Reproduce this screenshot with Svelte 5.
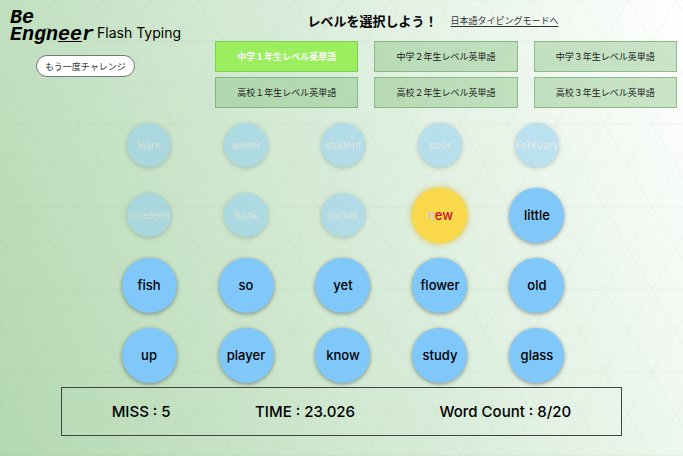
<script>
  const levels = [
    "中学１年生レベル英単語",
    "中学２年生レベル英単語",
    "中学３年生レベル英単語",
    "高校１年生レベル英単語",
    "高校２年生レベル英単語",
    "高校３年生レベル英単語",
  ];

  const words = [
    "learn", "winter", "student", "poor", "February",
    "nineteen", "bank", "racket", "new", "little",
    "fish", "so", "yet", "flower", "old",
    "up", "player", "know", "study", "glass",
  ];

  let level = $state(0);
  let current = $state(8);
  let typed = $state(1);
  let miss = $state(5);
  let time = $state("23.026");

  function restart() {
    current = 0;
    typed = 0;
    miss = 0;
    time = "0.000";
  }

  function selectLevel(index) {
    level = index;
    restart();
  }

  function handleKeydown(event) {
    if (current >= words.length || event.key.length !== 1) {
      return;
    }
    if (event.key !== words[current][typed]) {
      miss += 1;
      return;
    }
    typed += 1;
    if (typed === words[current].length) {
      current += 1;
      typed = 0;
    }
  }
</script>

<svelte:window onkeydown={handleKeydown} />

<div class="page">
  <svg class="backdrop" aria-hidden="true">
    <defs>
      <pattern id="triangles" x="6" y="0" width="47.86" height="82.8" patternUnits="userSpaceOnUse">
        <path
          d="M0 0H47.86M0 41.4H47.86M0 0L47.86 82.8M47.86 0L0 82.8"
          fill="none"
          stroke="#6f9f78"
          stroke-opacity="0.07"
        />
      </pattern>
    </defs>
    <rect width="100%" height="100%" fill="url(#triangles)" />
  </svg>

  <header>
    <div class="brand">
      <h1>
        <span class="logo">
          <span>Be</span>
          <span>Eng<i class="dot"></i>n<span class="line">ee</span>r</span>
        </span>
        <span class="title">Flash Typing</span>
      </h1>
      <button type="button" class="retry" onclick={restart}>もう一度チャレンジ</button>
    </div>

    <div class="menu">
      <div class="lead">
        <h2>レベルを選択しよう！</h2>
        <a href="#japanese">日本語タイピングモードへ</a>
      </div>
      <div class="levels">
        {#each levels as name, index (name)}
          <button
            type="button"
            class="level"
            class:active={level === index}
            aria-pressed={level === index}
            onclick={() => selectLevel(index)}
          >
            {name}
          </button>
        {/each}
      </div>
    </div>
  </header>

  <main>
    <ul class="words">
      {#each words as word, index (word)}
        <li class="word" class:done={index < current} class:current={index === current}>
          {#if index === current}
            <span class="typed">{word.slice(0, typed)}</span>{word.slice(typed)}
          {:else}
            {word}
          {/if}
        </li>
      {/each}
    </ul>

    <div class="stats">
      <span>MISS : {miss}</span>
      <span>TIME : {time}</span>
      <span>Word Count : {current}/{words.length}</span>
    </div>
  </main>
</div>

<style>
  :global(body) {
    margin: 0;
  }

  .page {
    position: relative;
    min-height: 100vh;
    box-sizing: border-box;
    background: linear-gradient(69deg, #b3d8b0, #d9edda 54%, #fff);
    color: #000;
    font-family: Inter, "Noto Sans CJK JP", sans-serif;
  }

  .backdrop {
    position: absolute;
    inset: 0;
    width: 100%;
    height: 100%;
  }

  header,
  main {
    position: relative;
  }

  header {
    display: grid;
    grid-template-columns: 215px 1fr;
    padding-right: 6px;
  }

  .brand {
    padding: 9px 0 0 10px;
  }

  h1 {
    display: flex;
    align-items: flex-end;
    gap: 3px;
    margin: 0;
    font-size: 14px;
    font-weight: 400;
    line-height: 17px;
    white-space: nowrap;
  }

  .logo {
    display: grid;
    font: italic bold 20px/17px "Liberation Mono", monospace;
  }

  .dot {
    position: absolute;
    width: 3px;
    height: 1px;
    margin-top: 2px;
    background: #3fae4a;
  }

  .line {
    text-decoration: underline 1px;
    text-underline-offset: 1px;
    text-decoration-skip-ink: none;
  }

  .title {
    padding-bottom: 2px;
  }

  .retry {
    display: block;
    height: 22px;
    margin: 12px 0 0 26px;
    padding: 0 8px;
    border: 1px solid #777;
    border-radius: 11px;
    background: #fff;
    color: #333;
    font: inherit;
    font-size: 9px;
    cursor: pointer;
  }

  .lead {
    display: flex;
    align-items: center;
    justify-content: center;
    gap: 13px;
    height: 41px;
    padding-right: 26px;
  }

  h2 {
    margin: 0;
    font-size: 13px;
    font-weight: 700;
  }

  a {
    color: #333;
    font-size: 9px;
    text-underline-offset: 2px;
  }

  .levels {
    display: grid;
    grid-template-columns: repeat(3, 1fr);
    gap: 5px 16px;
  }

  .level {
    height: 31px;
    padding: 0;
    border: 1px solid rgba(70, 140, 70, 0.45);
    background: rgba(128, 190, 120, 0.4);
    color: #222;
    font: inherit;
    font-size: 9px;
    cursor: pointer;
  }

  .level.active {
    border-color: #84cc55;
    background: #9bee5d;
    color: #fff;
    font-weight: 700;
  }

  .words {
    display: grid;
    grid-template-columns: repeat(5, 1fr);
    grid-auto-rows: 56px;
    row-gap: 14px;
    place-items: center;
    width: 71%;
    margin: 9px auto 0;
    padding: 0 0 0 3px;
    list-style: none;
  }

  .word {
    display: flex;
    align-items: center;
    justify-content: center;
    width: 55px;
    height: 55px;
    border-radius: 50%;
    background: #80c8f9;
    box-shadow: 0 1px 4px rgba(0, 0, 0, 0.4);
    font-size: 13px;
    font-weight: 500;
  }

  .word.done {
    width: 44px;
    height: 44px;
    background: #8dcdf5;
    color: #ddd;
    font-size: 10px;
    opacity: 0.5;
  }

  .word.current {
    background: #f9d849;
    box-shadow: 0 0 6px rgba(230, 180, 20, 0.9);
    color: #c8102e;
  }

  .typed {
    color: #ccc;
  }

  .stats {
    display: flex;
    align-items: center;
    justify-content: space-around;
    box-sizing: border-box;
    width: 82%;
    height: 49px;
    margin: 4px auto 0;
    padding: 0 7px;
    border: 1px solid #444;
    font-size: 15px;
    font-weight: 500;
  }
</style>
